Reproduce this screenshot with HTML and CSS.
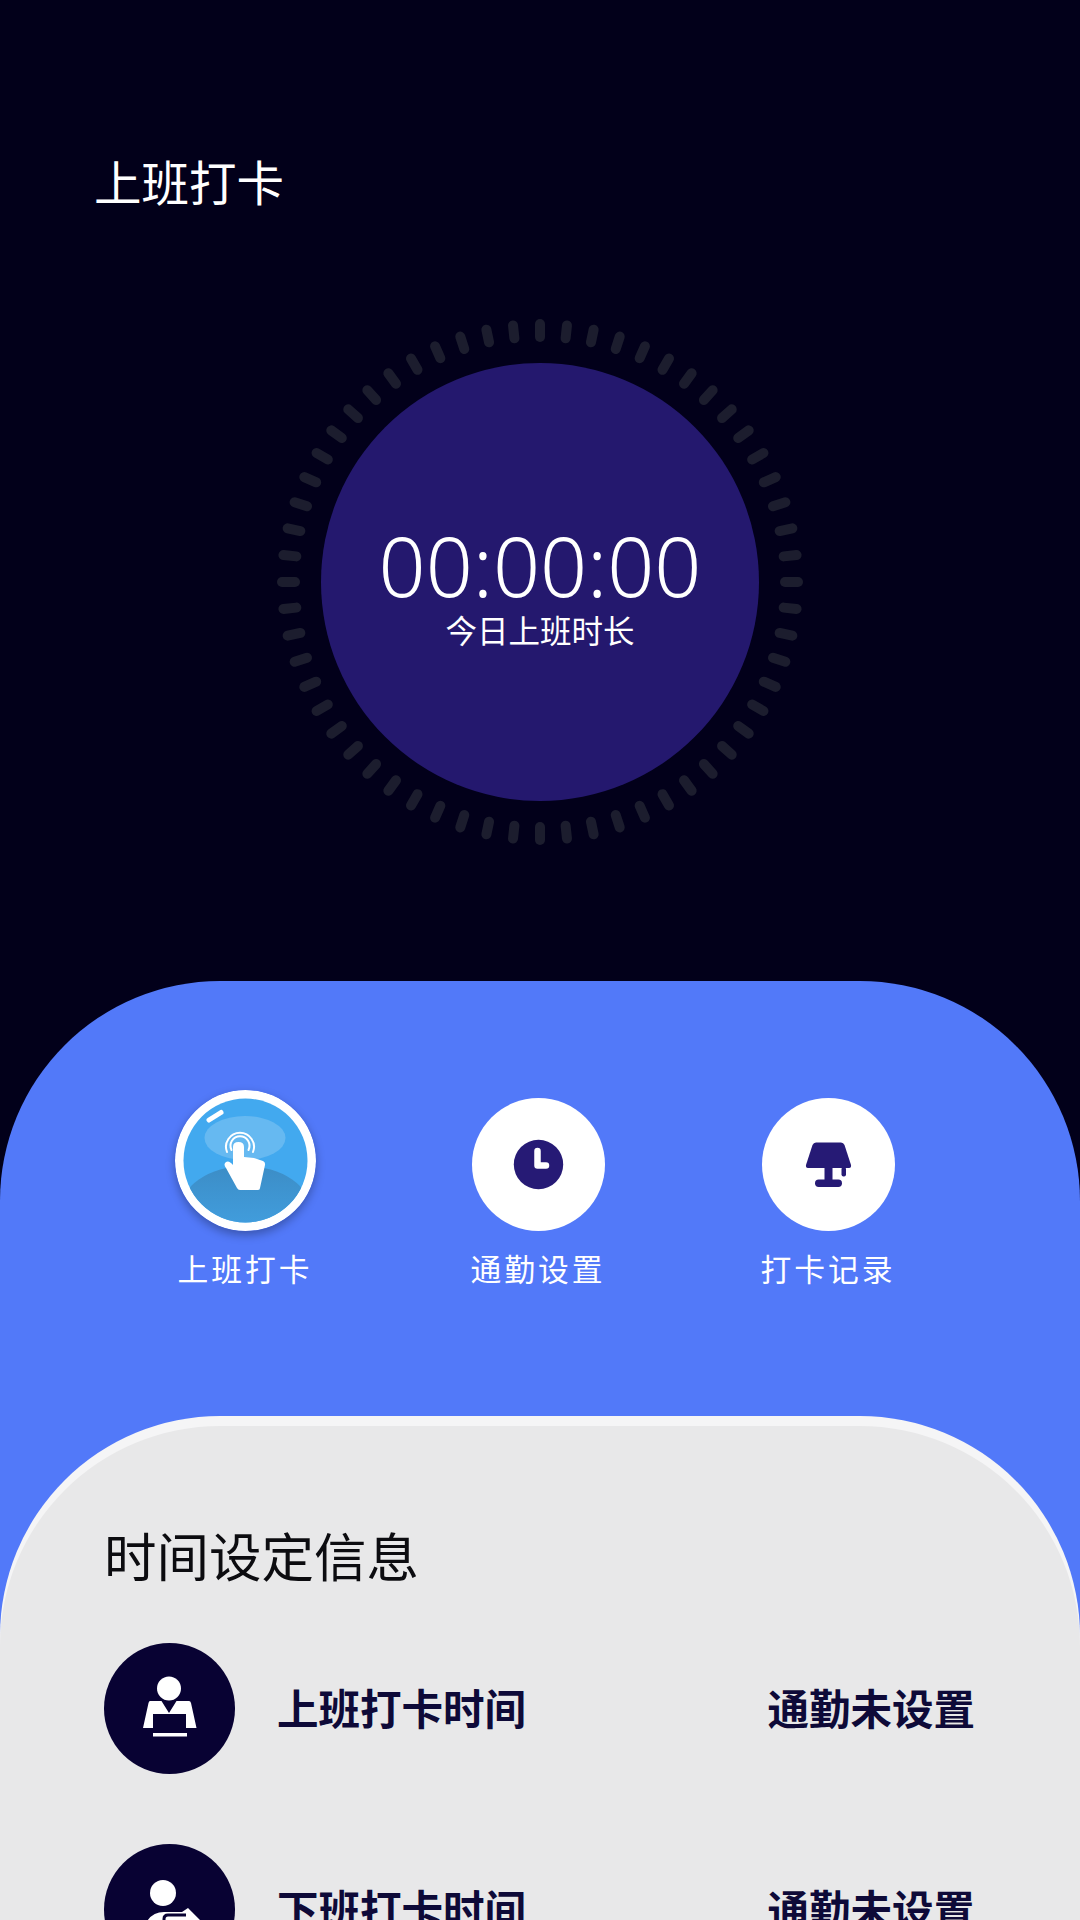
FILE: index.html
```html
<!DOCTYPE html>
<html lang="zh-CN">
<head>
  <meta charset="UTF-8">
  <title>上班打卡</title>
  <link rel="stylesheet" href="styles.css">
</head>
<body>
  <div class="page">
    <h1 class="page-title">上班打卡</h1>

    <div class="dial">
      <svg class="dial-ticks" id="dialTicks" width="526" height="526" viewBox="0 0 526 526"></svg>
      <div class="dial-face">
        <div class="dial-time">00:00:00</div>
        <div class="dial-label">今日上班时长</div>
      </div>
    </div>

    <div class="actions-panel">
      <div class="actions">
        <div class="action">
          <svg class="punch-ball" width="141" height="141" viewBox="0 0 141 141">
            <defs>
              <clipPath id="ballClip"><circle cx="70.5" cy="70.5" r="62"/></clipPath>
              <linearGradient id="hillFill" x1="0" y1="0" x2="0" y2="1">
                <stop offset="0" stop-color="#3c8dc6"/>
                <stop offset="1" stop-color="#44a6ea"/>
              </linearGradient>
            </defs>
            <circle cx="70.5" cy="70.5" r="70.5" fill="#fff"/>
            <circle cx="70.5" cy="70.5" r="62" fill="#42a9ef"/>
            <g clip-path="url(#ballClip)">
              <ellipse cx="70.5" cy="122" rx="66" ry="46" fill="url(#hillFill)"/>
            </g>
            <ellipse cx="70" cy="48" rx="40.5" ry="22" fill="#66b9f1"/>
            <path d="M34 30 L46 22.5" stroke="#fff" stroke-width="5" stroke-linecap="round" fill="none"/>
            <path d="M52 62 A14 14 0 1 1 78 62" stroke="#fff" stroke-width="2" stroke-linecap="round" fill="none"/>
            <path d="M56.500 60 A9.500 9.500 0 1 1 73.500 60" stroke="#fff" stroke-width="2" stroke-linecap="round" fill="none"/>
            <path d="M58 57 Q58 52 63.500 52 Q69 52 69 57 L69 67 L79 68 L88 71 Q90.500 72 90 75 L85 98 Q85 100 83 100 L65 100 Q63 100 62 98 L51 78 Q48 74 51 72 Q54 70 58 75 Z" fill="#fff"/>
          </svg>
          <span class="action-name">上班打卡</span>
        </div>
        <div class="action">
          <svg class="action-icon" width="133" height="133" viewBox="0 0 133 133">
            <circle cx="66.500" cy="66.500" r="66.500" fill="#fff"/>
            <circle cx="66.500" cy="66.500" r="24.700" fill="#261a75"/>
            <path d="M65.500 53 V67.500 H74" stroke="#fff" stroke-width="6.500" stroke-linecap="round" stroke-linejoin="round" fill="none"/>
          </svg>
          <span class="action-name">通勤设置</span>
        </div>
        <div class="action">
          <svg class="action-icon" width="133" height="133" viewBox="0 0 133 133">
            <circle cx="66.500" cy="66.500" r="66.500" fill="#fff"/>
            <path d="M54 44.500 H79 Q81.500 44.500 82.500 47 L89 67 Q89.500 70 87 70 H46 Q43.500 70 44 67 L50.500 47 Q51.500 44.500 54 44.500 Z" fill="#261a75"/>
            <rect x="62.500" y="69" width="8" height="14" fill="#261a75"/>
            <rect x="79.500" y="69" width="4.500" height="9.500" rx="2" fill="#261a75"/>
            <rect x="53" y="81.500" width="27" height="7.500" rx="3.700" fill="#261a75"/>
          </svg>
          <span class="action-name">打卡记录</span>
        </div>
      </div>

      <div class="info-panel">
        <div class="info-body">
          <h2 class="info-title">时间设定信息</h2>
          <div class="info-row">
            <svg class="info-icon" width="131" height="131" viewBox="0 0 131 131">
              <circle cx="65.500" cy="65.500" r="65.500" fill="#080233"/>
              <circle cx="65" cy="45.500" r="12" fill="#fff"/>
              <path d="M46 58 H57.500 L65 70 L72.500 58 H85 Q86.500 58 87 60 L92.500 85 H39 L44.500 60 Q45 58 46 58 Z" fill="#fff"/>
              <rect x="49" y="71" width="33" height="16" fill="#080233"/>
              <rect x="49" y="90" width="34" height="3.500" fill="#fff"/>
            </svg>
            <span class="info-name">上班打卡时间</span>
            <span class="info-value">通勤未设置</span>
          </div>
          <div class="info-row">
            <svg class="info-icon" width="131" height="131" viewBox="0 0 131 131">
              <circle cx="65.500" cy="65.500" r="65.500" fill="#080233"/>
              <circle cx="59" cy="49" r="13" fill="#fff"/>
              <path d="M38 92 Q42 68 60 68 H78 L84 64 L102 82 L84 100 H38 Z" fill="#fff"/>
              <path d="M60 82 V75 Q60 71 64 71 H82" stroke="#080233" stroke-width="3" fill="none"/>
            </svg>
            <span class="info-name">下班打卡时间</span>
            <span class="info-value">通勤未设置</span>
          </div>
        </div>
      </div>
    </div>
  </div>

  <script>
    // Draw the 60 tick marks round the dial
    const ticks = document.getElementById("dialTicks");
    for (let i = 0; i < 60; i++) {
      const tick = document.createElementNS("http://www.w3.org/2000/svg", "rect");
      tick.setAttribute("x", 258);
      tick.setAttribute("y", 0);
      tick.setAttribute("width", 10);
      tick.setAttribute("height", 23);
      tick.setAttribute("rx", 5);
      tick.setAttribute("fill", "#1c1d2e");
      tick.setAttribute("transform", `rotate(${i * 6} 263 263)`);
      ticks.appendChild(tick);
    }
  </script>
</body>
</html>
```

FILE: styles.css
```css
* {
  box-sizing: border-box;
}
body {
  margin: 0;
  background: #02001a;
  font-family: "Noto Sans CJK SC", "Noto Sans", sans-serif;
}
.page {
  width: 1080px;
  height: 1920px;
  overflow: hidden;
  padding-top: 146px;
}
.page-title {
  margin: 0 0 0 94px;
  height: 70px;
  line-height: 70px;
  font-size: 47.500px;
  font-weight: 400;
  color: #fff;
}
.dial {
  position: relative;
  width: 526px;
  height: 526px;
  margin: 103px auto 0;
  display: flex;
  align-items: center;
  justify-content: center;
}
.dial-ticks {
  position: absolute;
  left: 0;
  top: 0;
}
.dial-face {
  width: 438px;
  height: 438px;
  border-radius: 50%;
  background: #24186e;
  color: #fff;
  display: flex;
  flex-direction: column;
  align-items: center;
  padding-top: 160px;
}
.dial-time {
  font-family: "Noto Sans", sans-serif;
  font-size: 82.500px;
  font-weight: 300;
  line-height: 84px;
}
.dial-label {
  font-size: 31.500px;
  font-weight: 400;
  line-height: 44px;
}
.actions-panel {
  height: 939px;
  margin-top: 136px;
  background: #5279f9;
  border-radius: 220px 220px 0 0;
  padding-top: 109px;
}
.actions {
  display: grid;
  grid-template-columns: 293px 290px 140px;
  padding-left: 175px;
  height: 326px;
}
.action {
  display: flex;
  flex-direction: column;
  align-items: center;
  width: 140px;
}
.punch-ball {
  flex: none;
  border-radius: 50%;
  box-shadow: 0 4px 10px rgba(0, 0, 0, 0.3);
}
.action-icon {
  flex: none;
  margin-top: 8px;
}
.action-name {
  margin-top: 15px;
  width: 170px;
  text-align: center;
  font-size: 30.800px;
  font-weight: 400;
  line-height: 44px;
  letter-spacing: 3px;
  color: #fff;
}
.info-panel {
  height: 600px;
  background: #f5f5f6;
  border-radius: 220px 220px 0 0;
  padding-top: 10px;
}
.info-body {
  height: 590px;
  background: #e8e8e9;
  border-radius: 220px 220px 0 0;
  padding: 0 105px 0 104px;
}
.info-title {
  margin: 0;
  padding-top: 97px;
  height: 217px;
  line-height: 62px;
  font-size: 52.500px;
  font-weight: 400;
  color: #0c0c10;
}
.info-row {
  display: flex;
  align-items: center;
  height: 131px;
  margin-bottom: 70px;
  color: #0e0a38;
  font-size: 41.500px;
  font-weight: 700;
}
.info-icon {
  flex: none;
}
.info-name {
  margin: 0 0 4px 42px;
}
.info-value {
  margin: 0 0 4px auto;
}
```
